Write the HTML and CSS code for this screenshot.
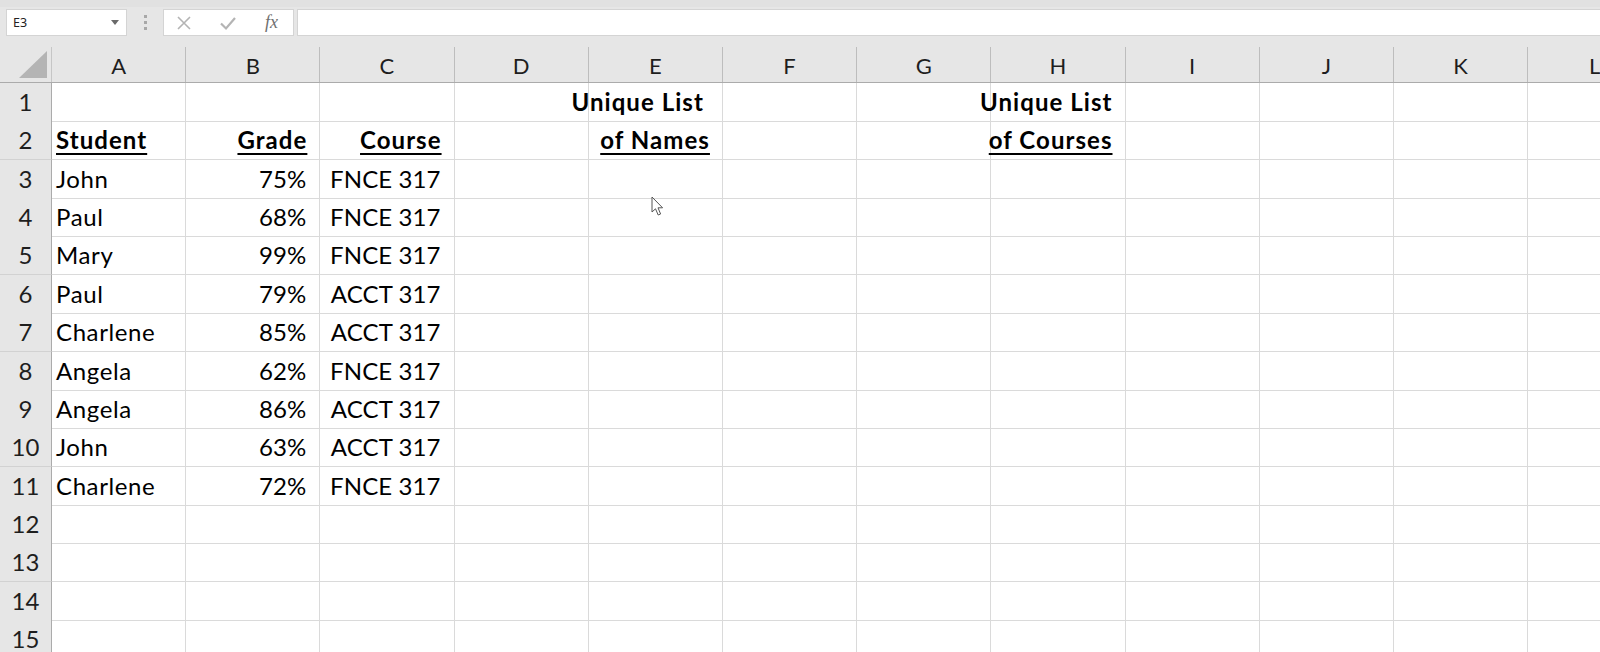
FILE: index.html
```html
<!DOCTYPE html>
<html>
<head>
<meta charset="utf-8">
<link rel="stylesheet" href="styles.css">
</head>
<body>
<div class="app">
  <div class="topbar">
    <div class="namebox"><span class="name">E3</span><span class="caret"></span></div>
    <div class="grip"><i></i><i></i><i></i></div>
    <div class="fbtns">
      <svg class="ico" width="16" height="16" viewBox="0 0 16 16"><path d="M2 2 L14 14 M14 2 L2 14" stroke="#b4b4b4" stroke-width="1.6" fill="none"/></svg>
      <svg class="ico" width="18" height="16" viewBox="0 0 18 16"><path d="M2 8.5 L7 13.5 L16 3" stroke="#b4b4b4" stroke-width="2.2" fill="none"/></svg>
      <span class="fx">fx</span>
    </div>
    <div class="finput"></div>
  </div>

  <div class="sheet">
    <div class="row head">
      <div class="corner"><span class="tri"></span></div>
      <div class="ch">A</div><div class="ch">B</div><div class="ch">C</div><div class="ch">D</div><div class="ch">E</div><div class="ch">F</div><div class="ch">G</div><div class="ch">H</div><div class="ch">I</div><div class="ch">J</div><div class="ch">K</div><div class="ch">L</div>
    </div>
    <div class="row">
      <div class="rh">1</div>
      <div class="c"></div><div class="c"></div><div class="c"></div><div class="c"></div><div class="c r b trail"><span>Unique List</span></div><div class="c"></div><div class="c"></div><div class="c r b"><span>Unique List</span></div><div class="c"></div><div class="c"></div><div class="c"></div><div class="c"></div>
    </div>
    <div class="row">
      <div class="rh">2</div>
      <div class="c b u"><span>Student</span></div><div class="c r b u"><span>Grade</span></div><div class="c r b u"><span>Course</span></div><div class="c"></div><div class="c r b u"><span>of Names</span></div><div class="c"></div><div class="c"></div><div class="c r b u"><span>of Courses</span></div><div class="c"></div><div class="c"></div><div class="c"></div><div class="c"></div>
    </div>
    <div class="row">
      <div class="rh">3</div>
      <div class="c"><span>John</span></div><div class="c r"><span>75%</span></div><div class="c r"><span>FNCE 317</span></div><div class="c"></div><div class="c"></div><div class="c"></div><div class="c"></div><div class="c"></div><div class="c"></div><div class="c"></div><div class="c"></div><div class="c"></div>
    </div>
    <div class="row">
      <div class="rh">4</div>
      <div class="c"><span>Paul</span></div><div class="c r"><span>68%</span></div><div class="c r"><span>FNCE 317</span></div><div class="c"></div><div class="c"></div><div class="c"></div><div class="c"></div><div class="c"></div><div class="c"></div><div class="c"></div><div class="c"></div><div class="c"></div>
    </div>
    <div class="row">
      <div class="rh">5</div>
      <div class="c"><span>Mary</span></div><div class="c r"><span>99%</span></div><div class="c r"><span>FNCE 317</span></div><div class="c"></div><div class="c"></div><div class="c"></div><div class="c"></div><div class="c"></div><div class="c"></div><div class="c"></div><div class="c"></div><div class="c"></div>
    </div>
    <div class="row">
      <div class="rh">6</div>
      <div class="c"><span>Paul</span></div><div class="c r"><span>79%</span></div><div class="c r"><span>ACCT 317</span></div><div class="c"></div><div class="c"></div><div class="c"></div><div class="c"></div><div class="c"></div><div class="c"></div><div class="c"></div><div class="c"></div><div class="c"></div>
    </div>
    <div class="row">
      <div class="rh">7</div>
      <div class="c"><span>Charlene</span></div><div class="c r"><span>85%</span></div><div class="c r"><span>ACCT 317</span></div><div class="c"></div><div class="c"></div><div class="c"></div><div class="c"></div><div class="c"></div><div class="c"></div><div class="c"></div><div class="c"></div><div class="c"></div>
    </div>
    <div class="row">
      <div class="rh">8</div>
      <div class="c"><span>Angela</span></div><div class="c r"><span>62%</span></div><div class="c r"><span>FNCE 317</span></div><div class="c"></div><div class="c"></div><div class="c"></div><div class="c"></div><div class="c"></div><div class="c"></div><div class="c"></div><div class="c"></div><div class="c"></div>
    </div>
    <div class="row">
      <div class="rh">9</div>
      <div class="c"><span>Angela</span></div><div class="c r"><span>86%</span></div><div class="c r"><span>ACCT 317</span></div><div class="c"></div><div class="c"></div><div class="c"></div><div class="c"></div><div class="c"></div><div class="c"></div><div class="c"></div><div class="c"></div><div class="c"></div>
    </div>
    <div class="row">
      <div class="rh">10</div>
      <div class="c"><span>John</span></div><div class="c r"><span>63%</span></div><div class="c r"><span>ACCT 317</span></div><div class="c"></div><div class="c"></div><div class="c"></div><div class="c"></div><div class="c"></div><div class="c"></div><div class="c"></div><div class="c"></div><div class="c"></div>
    </div>
    <div class="row">
      <div class="rh">11</div>
      <div class="c"><span>Charlene</span></div><div class="c r"><span>72%</span></div><div class="c r"><span>FNCE 317</span></div><div class="c"></div><div class="c"></div><div class="c"></div><div class="c"></div><div class="c"></div><div class="c"></div><div class="c"></div><div class="c"></div><div class="c"></div>
    </div>
    <div class="row">
      <div class="rh">12</div>
      <div class="c"></div><div class="c"></div><div class="c"></div><div class="c"></div><div class="c"></div><div class="c"></div><div class="c"></div><div class="c"></div><div class="c"></div><div class="c"></div><div class="c"></div><div class="c"></div>
    </div>
    <div class="row">
      <div class="rh">13</div>
      <div class="c"></div><div class="c"></div><div class="c"></div><div class="c"></div><div class="c"></div><div class="c"></div><div class="c"></div><div class="c"></div><div class="c"></div><div class="c"></div><div class="c"></div><div class="c"></div>
    </div>
    <div class="row">
      <div class="rh">14</div>
      <div class="c"></div><div class="c"></div><div class="c"></div><div class="c"></div><div class="c"></div><div class="c"></div><div class="c"></div><div class="c"></div><div class="c"></div><div class="c"></div><div class="c"></div><div class="c"></div>
    </div>
    <div class="row">
      <div class="rh">15</div>
      <div class="c"></div><div class="c"></div><div class="c"></div><div class="c"></div><div class="c"></div><div class="c"></div><div class="c"></div><div class="c"></div><div class="c"></div><div class="c"></div><div class="c"></div><div class="c"></div>
    </div>

    <svg class="cursor" width="14" height="22" viewBox="0 0 14 22"><path d="M1 1 L1 16 L4.5 12.8 L7.2 19 L9.6 18 L7 11.8 L11.6 11.8 Z" fill="#fff" stroke="#555" stroke-width="1" stroke-linejoin="round"/></svg>
  </div>
</div>
</body>
</html>
```

FILE: styles.css
```css
* { box-sizing: border-box; }
html, body { margin: 0; padding: 0; }
body {
  width: 1600px;
  height: 652px;
  overflow: hidden;
  background: #e6e6e6;
  font-family: Lato, "Noto Sans", sans-serif;
}
.app { width: 1600px; height: 652px; overflow: hidden; }

.topbar {
  height: 47px;
  display: flex;
  align-items: flex-start;
  padding-left: 6px;
  border-top: 7px solid #e1e1e1;
  padding-top: 2px;
  background: #e6e6e6;
}
.namebox {
  width: 121px;
  height: 27px;
  background: #fff;
  border: 1px solid #d4d4d4;
  display: flex;
  align-items: center;
  justify-content: space-between;
  padding: 0 7px 0 6px;
  font-family: "Noto Sans", "DejaVu Sans", sans-serif;
  font-size: 12.5px;
  color: #222;
}
.caret {
  width: 0; height: 0;
  border-left: 4.5px solid transparent;
  border-right: 4.5px solid transparent;
  border-top: 5px solid #6a6a6a;
}
.grip {
  width: 36px;
  height: 27px;
  display: flex;
  flex-direction: column;
  align-items: center;
  justify-content: center;
  gap: 3px;
}
.grip i { display: block; width: 3px; height: 3px; background: #a8a8a8; }
.fbtns {
  width: 131px;
  height: 27px;
  background: #fff;
  border: 1px solid #d4d4d4;
  display: flex;
  align-items: center;
  padding-left: 12px;
  gap: 27px;
}
.fx {
  font-family: "Liberation Serif", serif;
  font-style: italic;
  font-size: 18px;
  color: #6f6f6f;
  margin-left: 1px;
}
.finput {
  flex: 1;
  height: 27px;
  margin-left: 3px;
  background: #fff;
  border: 1px solid #d4d4d4;
  border-right: none;
}

.sheet { position: relative; background: #fff; }
.row {
  display: grid;
  grid-template-columns: 52px repeat(12, 134.2px);
  height: 38.36px;
}
.row.head {
  height: 36px;
  background: #e6e6e6;
  border-bottom: 1px solid #ababab;
}
.corner {
  position: relative;
  border-right: 1px solid #c6c6c6;
}
.tri {
  position: absolute;
  right: 4px;
  bottom: 4px;
  width: 0; height: 0;
  border-left: 28px solid transparent;
  border-bottom: 27px solid #b4b4b4;
}
.ch {
  border-right: 1px solid #bdbdbd;
  display: flex;
  align-items: center;
  justify-content: center;
  font-size: 22px;
  color: #1e1e1e;
  padding-top: 2px;
}
.rh {
  background: #e6e6e6;
  border-right: 1px solid #ababab;
  border-bottom: 1px solid #d2d2d2;
  text-align: center;
  font-size: 24px;
  line-height: 38px;
  color: #1e1e1e;
}
.c {
  display: flex;
  justify-content: flex-start;
  border-right: 1px solid #dadada;
  border-bottom: 1px solid #dadada;
  font-size: 24px;
  line-height: 38px;
  padding: 0 4px;
  color: #000;
  white-space: nowrap;
  letter-spacing: 0.6px;
}
.c span { flex: none; }
.c.r {
  justify-content: flex-end;
  padding-left: 0;
  padding-right: 13px;
  letter-spacing: 0.1px;
}
.c.b { font-weight: 700; letter-spacing: 1.05px; }
.c.r.b { padding-right: 12px; }
.c.u span {
  text-decoration: underline;
  text-decoration-thickness: 2px;
  text-underline-offset: 4px;
}
.c.r.b.trail { padding-right: 18px; }

.cursor {
  position: absolute;
  left: 651px;
  top: 149px;
}
```
